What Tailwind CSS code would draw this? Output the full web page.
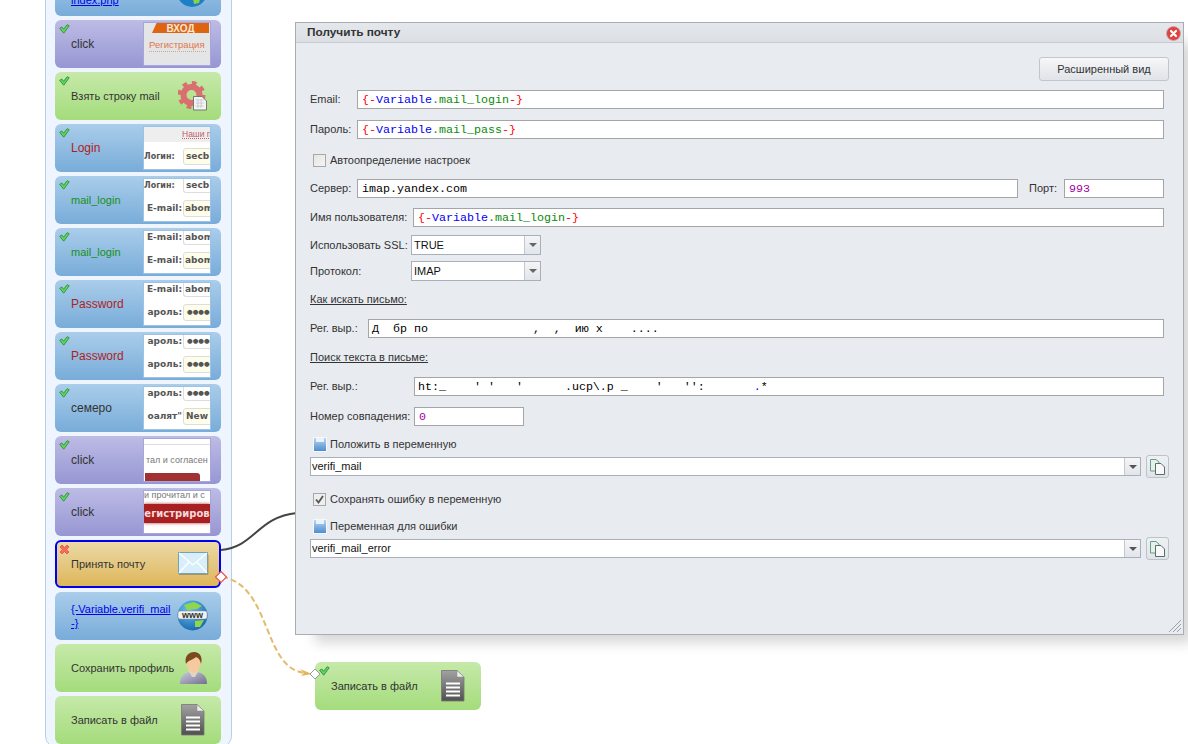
<!DOCTYPE html>
<html lang="ru">
<head>
<meta charset="utf-8">
<script src="https://cdn.jsdelivr.net/npm/@tailwindcss/browser@4"></script>
<title>Получить почту</title>
</head>
<body class="bg-white">
<div class="relative w-[1188px] h-[744px] overflow-hidden bg-white text-[11px] text-[#333] [font-family:'Liberation_Sans',sans-serif]">

  <!-- node column -->
  <div class="ml-[45px] -mt-[41px] w-[187px] h-[789px] bg-[#eef5fe] border border-[#b7d0e8] rounded-b-[12px] pt-[8px] pl-[9px] flex flex-col gap-[4px]">

    <div class="relative shrink-0 w-[166px] h-[48px] rounded-[6px] bg-gradient-to-b from-[#aacdea] to-[#78acd9] flex items-center pl-[16px]">
      <span class="text-[#0000ee] underline leading-[14px] mt-[16px]">index.php</span>
      <svg class="absolute left-[122px] top-[9px]" width="30" height="30" viewBox="0 0 30 30"><circle cx="15" cy="15" r="15" fill="#1d7fc4"/><path d="M8 5 L18 3 L24 8 L18 12 L12 11Z M16 22 L24 19 L22 26 L17 27Z" fill="#8fd04a"/></svg>
    </div>

    <!-- click / registration -->
    <div class="relative shrink-0 w-[166px] h-[48px] rounded-[6px] bg-gradient-to-b from-[#bdbce5] to-[#9796d3] flex items-center pl-[16px] text-[12px]">
      <svg class="absolute left-[4px] top-[4px]" width="11" height="10" viewBox="0 0 11 10"><path d="M.7 4.3 L2.8 3 L4.6 5.3 L8.2.7 L10.2 1.8 L4.7 9.2Z" fill="#5fd75f" stroke="#2c8f3a" stroke-width=".9"/></svg>
      <span>click</span>
      <div class="absolute left-[88px] top-[2px] w-[68px] h-[44px] border border-[#a7a6da] bg-[#e4e5e6] overflow-hidden">
        <div class="ml-[8px] mr-[1px] h-[10px] bg-[#dd6411] flex items-end justify-center text-[10px] leading-[8px] font-bold text-[#fbe6d5] [clip-path:polygon(8%_0,100%_0,100%_100%,0_100%)]">ВХОД</div>
        <div class="mt-[5px] ml-[5px] w-[57px] text-[9.5px] leading-[13px] whitespace-nowrap text-[#e0764a] border-b border-dotted border-[#d8a58a]">Регистрация</div>
      </div>
    </div>

    <!-- take line -->
    <div class="relative shrink-0 w-[166px] h-[48px] rounded-[6px] bg-gradient-to-b from-[#c6e9a9] to-[#a4dc7b] flex items-center pl-[16px]">
      <svg class="absolute left-[4px] top-[4px]" width="11" height="10" viewBox="0 0 11 10"><path d="M.7 4.3 L2.8 3 L4.6 5.3 L8.2.7 L10.2 1.8 L4.7 9.2Z" fill="#5fd75f" stroke="#2c8f3a" stroke-width=".9"/></svg>
      <span>Взять строку mail</span>
      <svg class="absolute left-[123px] top-[9px]" width="30" height="30" viewBox="0 0 30 30"><circle cx="13.5" cy="14" r="12" fill="none" stroke="#d96f6f" stroke-width="4" stroke-dasharray="4.6 4.82"/><circle cx="13.5" cy="14" r="8" fill="none" stroke="#d96f6f" stroke-width="6"/><path d="M15.5 15.5 H24 L28.5 20 V29 H15.5Z" fill="#f4f4f4" stroke="#777" stroke-width="1"/><path d="M17.5 19 H26 M17.5 22 H26 M17.5 25 H26 M20 18 V27 M23 18 V27" stroke="#c3c8cc" stroke-width=".8"/></svg>
    </div>

    <!-- Login -->
    <div class="relative shrink-0 w-[166px] h-[48px] rounded-[6px] bg-gradient-to-b from-[#aacdea] to-[#78acd9] flex items-center pl-[16px] text-[12px] text-[#b01e1e]">
      <svg class="absolute left-[4px] top-[4px]" width="11" height="10" viewBox="0 0 11 10"><path d="M.7 4.3 L2.8 3 L4.6 5.3 L8.2.7 L10.2 1.8 L4.7 9.2Z" fill="#5fd75f" stroke="#2c8f3a" stroke-width=".9"/></svg>
      <span>Login</span>
      <div class="absolute left-[88px] top-[2px] w-[68px] h-[44px] border border-[#9cc3e6] bg-white overflow-hidden text-[9px] font-bold text-[#555] [font-family:'DejaVu_Sans',sans-serif]">
        <div class="h-[15px] bg-[#eeeeee] flex items-center pl-[38px] whitespace-nowrap text-[#c0606e] [font-family:'Liberation_Sans',sans-serif] text-[8.5px] font-normal"><span class="underline decoration-dotted">Наши п</span></div>
        <div class="mt-[6px] flex items-center h-[17px]"><span class="w-[38px] shrink-0 text-[8px] whitespace-nowrap">Логин:</span><div class="ml-[1px] w-[40px] shrink-0 h-[17px] bg-[#fdfde9] border border-[#ddd] rounded-[3px] pl-[2px] text-[9px] leading-[15px] whitespace-nowrap">secb</div></div>
      </div>
    </div>

    <!-- mail_login 1 -->
    <div class="relative shrink-0 w-[166px] h-[48px] rounded-[6px] bg-gradient-to-b from-[#aacdea] to-[#78acd9] flex items-center pl-[16px] text-[#179017]">
      <svg class="absolute left-[4px] top-[4px]" width="11" height="10" viewBox="0 0 11 10"><path d="M.7 4.3 L2.8 3 L4.6 5.3 L8.2.7 L10.2 1.8 L4.7 9.2Z" fill="#5fd75f" stroke="#2c8f3a" stroke-width=".9"/></svg>
      <span>mail_login</span>
      <div class="absolute left-[88px] top-[2px] w-[68px] h-[44px] border border-[#9cc3e6] bg-white overflow-hidden text-[9px] font-bold text-[#555] [font-family:'DejaVu_Sans',sans-serif] flex flex-col justify-between">
        <div class="flex items-center h-[14px]"><span class="w-[38px] shrink-0 text-[8px] whitespace-nowrap">Логин:</span><div class="ml-[1px] w-[40px] shrink-0 h-[14px] bg-white border-l border-b border-[#ddd] rounded-bl-[3px] pl-[2px] text-[9px] leading-[13px] whitespace-nowrap">secb</div></div>
        <div class="mb-[4px] flex items-center h-[17px]"><span class="w-[38px] shrink-0 text-[9px] whitespace-nowrap overflow-hidden flex justify-end"><span class="shrink-0">E-mail:</span></span><div class="ml-[1px] w-[40px] shrink-0 h-[17px] bg-[#fdfde9] border border-[#ddd] rounded-[3px] pl-[1px] text-[9px] leading-[15px] whitespace-nowrap">abom</div></div>
      </div>
    </div>

    <!-- mail_login 2 -->
    <div class="relative shrink-0 w-[166px] h-[48px] rounded-[6px] bg-gradient-to-b from-[#aacdea] to-[#78acd9] flex items-center pl-[16px] text-[#179017]">
      <svg class="absolute left-[4px] top-[4px]" width="11" height="10" viewBox="0 0 11 10"><path d="M.7 4.3 L2.8 3 L4.6 5.3 L8.2.7 L10.2 1.8 L4.7 9.2Z" fill="#5fd75f" stroke="#2c8f3a" stroke-width=".9"/></svg>
      <span>mail_login</span>
      <div class="absolute left-[88px] top-[2px] w-[68px] h-[44px] border border-[#9cc3e6] bg-white overflow-hidden text-[9px] font-bold text-[#555] [font-family:'DejaVu_Sans',sans-serif] flex flex-col justify-between">
        <div class="flex items-center h-[14px]"><span class="w-[38px] shrink-0 text-[9px] whitespace-nowrap overflow-hidden flex justify-end"><span class="shrink-0">E-mail:</span></span><div class="ml-[1px] w-[40px] shrink-0 h-[14px] bg-white border-l border-b border-[#ddd] rounded-bl-[3px] pl-[1px] text-[9px] leading-[13px] whitespace-nowrap">abom</div></div>
        <div class="mb-[4px] flex items-center h-[17px]"><span class="w-[38px] shrink-0 text-[9px] whitespace-nowrap overflow-hidden flex justify-end"><span class="shrink-0">E-mail:</span></span><div class="ml-[1px] w-[40px] shrink-0 h-[17px] bg-[#fdfde9] border border-[#ddd] rounded-[3px] pl-[1px] text-[9px] leading-[15px] whitespace-nowrap">abom</div></div>
      </div>
    </div>

    <!-- Password 1 -->
    <div class="relative shrink-0 w-[166px] h-[48px] rounded-[6px] bg-gradient-to-b from-[#aacdea] to-[#78acd9] flex items-center pl-[16px] text-[12px] text-[#b01e1e]">
      <svg class="absolute left-[4px] top-[4px]" width="11" height="10" viewBox="0 0 11 10"><path d="M.7 4.3 L2.8 3 L4.6 5.3 L8.2.7 L10.2 1.8 L4.7 9.2Z" fill="#5fd75f" stroke="#2c8f3a" stroke-width=".9"/></svg>
      <span>Password</span>
      <div class="absolute left-[88px] top-[2px] w-[68px] h-[44px] border border-[#9cc3e6] bg-white overflow-hidden text-[9px] font-bold text-[#555] [font-family:'DejaVu_Sans',sans-serif] flex flex-col justify-between">
        <div class="flex items-center h-[14px]"><span class="w-[38px] shrink-0 text-[9px] whitespace-nowrap overflow-hidden flex justify-end"><span class="shrink-0">E-mail:</span></span><div class="ml-[1px] w-[40px] shrink-0 h-[14px] bg-white border-l border-b border-[#ddd] rounded-bl-[3px] pl-[1px] text-[9px] leading-[13px] whitespace-nowrap">abom</div></div>
        <div class="mb-[4px] flex items-center h-[17px]"><span class="w-[38px] shrink-0 text-[9px] whitespace-nowrap overflow-hidden flex justify-end"><span class="shrink-0">ароль:</span></span><div class="ml-[1px] w-[40px] shrink-0 h-[17px] bg-[#fdfde9] border border-[#ddd] rounded-[3px] pl-[3px] text-[6.5px] leading-[15px] whitespace-nowrap">●●●●●</div></div>
      </div>
    </div>

    <!-- Password 2 -->
    <div class="relative shrink-0 w-[166px] h-[48px] rounded-[6px] bg-gradient-to-b from-[#aacdea] to-[#78acd9] flex items-center pl-[16px] text-[12px] text-[#b01e1e]">
      <svg class="absolute left-[4px] top-[4px]" width="11" height="10" viewBox="0 0 11 10"><path d="M.7 4.3 L2.8 3 L4.6 5.3 L8.2.7 L10.2 1.8 L4.7 9.2Z" fill="#5fd75f" stroke="#2c8f3a" stroke-width=".9"/></svg>
      <span>Password</span>
      <div class="absolute left-[88px] top-[2px] w-[68px] h-[44px] border border-[#9cc3e6] bg-white overflow-hidden text-[9px] font-bold text-[#555] [font-family:'DejaVu_Sans',sans-serif] flex flex-col justify-between">
        <div class="flex items-center h-[14px]"><span class="w-[38px] shrink-0 text-[9px] whitespace-nowrap overflow-hidden flex justify-end"><span class="shrink-0">ароль:</span></span><div class="ml-[1px] w-[40px] shrink-0 h-[14px] bg-white border-l border-b border-[#ddd] rounded-bl-[3px] pl-[3px] text-[6.5px] leading-[13px] whitespace-nowrap">●●●●●</div></div>
        <div class="mb-[4px] flex items-center h-[17px]"><span class="w-[38px] shrink-0 text-[9px] whitespace-nowrap overflow-hidden flex justify-end"><span class="shrink-0">ароль:</span></span><div class="ml-[1px] w-[40px] shrink-0 h-[17px] bg-[#fdfde9] border border-[#ddd] rounded-[3px] pl-[3px] text-[6.5px] leading-[15px] whitespace-nowrap">●●●●●</div></div>
      </div>
    </div>

    <!-- семеро -->
    <div class="relative shrink-0 w-[166px] h-[48px] rounded-[6px] bg-gradient-to-b from-[#aacdea] to-[#78acd9] flex items-center pl-[16px] text-[12px]">
      <svg class="absolute left-[4px] top-[4px]" width="11" height="10" viewBox="0 0 11 10"><path d="M.7 4.3 L2.8 3 L4.6 5.3 L8.2.7 L10.2 1.8 L4.7 9.2Z" fill="#5fd75f" stroke="#2c8f3a" stroke-width=".9"/></svg>
      <span>семеро</span>
      <div class="absolute left-[88px] top-[2px] w-[68px] h-[44px] border border-[#9cc3e6] bg-white overflow-hidden text-[9px] font-bold text-[#555] [font-family:'DejaVu_Sans',sans-serif] flex flex-col justify-between">
        <div class="flex items-center h-[14px]"><span class="w-[38px] shrink-0 text-[9px] whitespace-nowrap overflow-hidden flex justify-end"><span class="shrink-0">ароль:</span></span><div class="ml-[1px] w-[40px] shrink-0 h-[14px] bg-white border-l border-b border-[#ddd] rounded-bl-[3px] pl-[3px] text-[6.5px] leading-[13px] whitespace-nowrap">●●●●●</div></div>
        <div class="mb-[4px] flex items-center h-[17px]"><span class="w-[38px] shrink-0 text-[9px] whitespace-nowrap overflow-hidden flex justify-end"><span class="shrink-0">оалят"</span></span><div class="ml-[1px] w-[40px] shrink-0 h-[17px] bg-[#fdfde9] border border-[#ddd] rounded-[3px] pl-[2px] text-[9px] leading-[15px] whitespace-nowrap">New</div></div>
      </div>
    </div>

    <!-- click 2 -->
    <div class="relative shrink-0 w-[166px] h-[48px] rounded-[6px] bg-gradient-to-b from-[#bdbce5] to-[#9796d3] flex items-center pl-[16px] text-[12px]">
      <svg class="absolute left-[4px] top-[4px]" width="11" height="10" viewBox="0 0 11 10"><path d="M.7 4.3 L2.8 3 L4.6 5.3 L8.2.7 L10.2 1.8 L4.7 9.2Z" fill="#5fd75f" stroke="#2c8f3a" stroke-width=".9"/></svg>
      <span>click</span>
      <div class="absolute left-[88px] top-[2px] w-[68px] h-[44px] border border-[#a7a6da] bg-white overflow-hidden flex flex-col">
        <div class="h-[6px] border-b border-[#ddd]"></div>
        <div class="mt-[9px] ml-[2px] text-[9px] leading-[13px] text-[#777] whitespace-nowrap">тал и согласен</div>
        <div class="mt-[6px] ml-[1px] w-[55px] flex-1 bg-[#a33030] rounded-tr-[3px]"></div>
      </div>
    </div>

    <!-- click 3 -->
    <div class="relative shrink-0 w-[166px] h-[48px] rounded-[6px] bg-gradient-to-b from-[#bdbce5] to-[#9796d3] flex items-center pl-[16px] text-[12px]">
      <svg class="absolute left-[4px] top-[4px]" width="11" height="10" viewBox="0 0 11 10"><path d="M.7 4.3 L2.8 3 L4.6 5.3 L8.2.7 L10.2 1.8 L4.7 9.2Z" fill="#5fd75f" stroke="#2c8f3a" stroke-width=".9"/></svg>
      <span>click</span>
      <div class="absolute left-[88px] top-[2px] w-[68px] h-[44px] border border-[#a7a6da] bg-white overflow-hidden flex flex-col">
        <div class="h-[10px] text-[9px] leading-[9px] text-[#777] whitespace-nowrap">и прочитал и с</div>
        <div class="mt-[3px] h-[19px] bg-[#a82020] shadow-[0_0_3px_#a33] text-[10px] leading-[19px] font-bold text-[#f6dada] whitespace-nowrap text-center [font-family:'DejaVu_Sans',sans-serif]">егистриров</div>
      </div>
    </div>

    <!-- receive mail -->
    <div class="relative shrink-0 w-[166px] h-[48px] rounded-[6px] border-2 border-[#0000f0] bg-gradient-to-b from-[#ecd9a6] to-[#ddb657] flex items-center pl-[14px]">
      <svg class="absolute left-[2px] top-[2px]" width="11" height="11" viewBox="0 0 11 11"><path d="M1 3 L3 1 L5.5 3.5 L8 1 L10 3 L7.5 5.5 L10 8 L8 10 L5.5 7.5 L3 10 L1 8 L3.5 5.5Z" fill="#fb6a5f" stroke="#d8483f" stroke-width=".7"/></svg>
      <span>Принять почту</span>
      <svg class="absolute left-[121px] top-[10px]" width="31" height="24" viewBox="0 0 31 24"><rect x=".5" y=".5" width="29" height="21" fill="#d8eefa" stroke="#6fa2bd"/><path d="M1 1 L15 13 L29 1 M1 21 L11 10 M29 21 L19 10" fill="none" stroke="#fff" stroke-width="1.3"/><path d="M1 22.5 H30 V3" fill="none" stroke="#a8955f" stroke-width="1"/></svg>
    </div>

    <!-- verifi_mail link -->
    <div class="relative shrink-0 w-[166px] h-[48px] rounded-[6px] bg-gradient-to-b from-[#aacdea] to-[#78acd9] flex items-center pl-[16px]">
      <a class="w-[104px] text-[#0000ee] underline leading-[14px]">{-Variable.verifi_mail -}</a>
      <svg class="absolute left-[122px] top-[8px]" width="31" height="31" viewBox="0 0 31 31"><defs><radialGradient id="g1" cx=".4" cy=".3" r=".8"><stop offset="0" stop-color="#6cc4f2"/><stop offset="1" stop-color="#0f5ea8"/></radialGradient></defs><circle cx="15.5" cy="15.5" r="15" fill="url(#g1)"/><path d="M7 5 L17 2 L25 6 L20 9 L14 9 L11 11Z M18 21 L27 20 L23 27 L18 27Z" fill="#90d64c"/><rect x="1" y="11" width="29" height="8" rx="2" fill="#f2f2f2" stroke="#888" stroke-width=".5"/><text x="15.5" y="18" text-anchor="middle" font-size="9" font-weight="700" font-family="Liberation Sans" fill="#333">www</text></svg>
    </div>

    <!-- save profile -->
    <div class="relative shrink-0 w-[166px] h-[48px] rounded-[6px] bg-gradient-to-b from-[#c6e9a9] to-[#a4dc7b] flex items-center pl-[16px]">
      <span>Сохранить профиль</span>
      <svg class="absolute left-[124px] top-[8px]" width="29" height="33" viewBox="0 0 29 33"><defs><linearGradient id="g2" x1="0" y1="0" x2="1" y2="1"><stop offset="0" stop-color="#c9c9dd"/><stop offset="1" stop-color="#71718f"/></linearGradient></defs><path d="M1 32 C1 24 5 21 11 20 L18 20 C24 21 28 24 28 32Z" fill="url(#g2)"/><path d="M9 18 H20 L16 25 L13 25Z" fill="#e7d2bf"/><ellipse cx="14.5" cy="11" rx="7" ry="9" fill="#f6c99f"/><path d="M7 12 C5 4 10 0 15 0 C21 0 24 5 22 12 C21 7 19 6 17 5 C14 8 9 8 7 12Z" fill="#7a4a1d"/></svg>
    </div>

    <!-- write file -->
    <div class="relative shrink-0 w-[166px] h-[48px] rounded-[6px] bg-gradient-to-b from-[#c6e9a9] to-[#a4dc7b] flex items-center pl-[16px]">
      <span>Записать в файл</span>
      <svg class="absolute left-[124px] top-[8px]" width="28" height="32" viewBox="0 0 28 32"><defs><linearGradient id="g3" x1="0" y1="0" x2="0" y2="1"><stop offset="0" stop-color="#a2a2a2"/><stop offset="1" stop-color="#505050"/></linearGradient></defs><path d="M2.500 .5 H18 L25 7 V31 H2.500Z" fill="url(#g3)" stroke="#777" stroke-width=".8"/><path d="M18 .5 V7 H25Z" fill="#eee" stroke="#888" stroke-width=".5"/><path d="M7 13.500 H21 M7 17.500 H21 M7 21.500 H21 M7 25.500 H21" stroke="#fff" stroke-width="2"/></svg>
    </div>
  </div>

  <!-- free-standing diagram node -->
  <div class="absolute left-[315px] top-[662px] w-[166px] h-[48px] rounded-[6px] bg-gradient-to-b from-[#c6e9a9] to-[#a4dc7b] flex items-center pl-[16px]">
    <svg class="absolute left-[4px] top-[4px]" width="11" height="10" viewBox="0 0 11 10"><path d="M.7 4.3 L2.8 3 L4.6 5.3 L8.2.7 L10.2 1.800 L4.7 9.2Z" fill="#5fd75f" stroke="#2c8f3a" stroke-width=".9"/></svg>
    <span>Записать в файл</span>
    <svg class="absolute left-[124px] top-[8px]" width="28" height="32" viewBox="0 0 28 32"><defs><linearGradient id="g4" x1="0" y1="0" x2="0" y2="1"><stop offset="0" stop-color="#a2a2a2"/><stop offset="1" stop-color="#505050"/></linearGradient></defs><path d="M2.500 .5 H18 L25 7 V31 H2.500Z" fill="url(#g4)" stroke="#777" stroke-width=".8"/><path d="M18 .5 V7 H25Z" fill="#eee" stroke="#888" stroke-width=".5"/><path d="M7 13.500 H21 M7 17.500 H21 M7 21.500 H21 M7 25.500 H21" stroke="#fff" stroke-width="2"/></svg>
  </div>

  <!-- connections -->
  <svg class="absolute left-0 top-0 pointer-events-none" width="1188" height="744" viewBox="0 0 1188 744">
    <path d="M221 550 C255 547 257 517 297 513" fill="none" stroke="#444" stroke-width="2"/>
    <path d="M222 577 C272 585 262 670 306 673" fill="none" stroke="#e2bb6c" stroke-width="2" stroke-dasharray="6 3"/>
    <path d="M300 669 L312 674 L301 676 L304 673Z" fill="#e2b65f"/>
    <path d="M221 571.500 L226.500 577 L221 582.500 L215.500 577Z" fill="#fff" stroke="#f05050" stroke-width="1.2"/>
    <path d="M315 669 L320 674 L315 679 L310 674Z" fill="#fff" stroke="#999" stroke-width="1"/>
  </svg>

  <!-- dialog -->
  <div class="absolute left-[295px] top-[22px] w-[889px] h-[613px] border border-[#a9adb2] bg-[#e8ebf0] flex flex-col shadow-[14px_14px_12px_-6px_rgba(0,0,0,0.16)]">
    <div class="relative shrink-0 h-[20px] bg-gradient-to-b from-[#e4e7eb] to-[#dcdfe4] border-b border-[#c8ccd1] pl-[11px] pt-[1px] flex items-center font-bold text-[11.8px] text-[#333]">
      Получить почту
      <svg class="absolute right-[2px] top-[3px]" width="15" height="15" viewBox="0 0 15 15"><circle cx="7.500" cy="7.500" r="7" fill="#e2423f" stroke="#c9aaa8" stroke-width=".8"/><path d="M5 5 L10 10 M10 5 L5 10" stroke="#fff" stroke-width="2.200" stroke-linecap="round"/></svg>
    </div>

    <div class="relative flex-1 pl-[14px] pr-[14px] flex flex-col">
      <div class="mt-[14px] flex justify-end">
        <button class="w-[130px] h-[24px] rounded-[3px] border border-[#c2c6cc] bg-gradient-to-b from-[#f5f7f9] to-[#e0e3e8] text-[#333]">Расширенный вид</button>
      </div>

      <div class="mt-[9px] mr-[5px] flex items-center h-[19px]">
        <span class="w-[47px] shrink-0">Email:</span>
        <div class="flex-1 h-[19px] bg-white border border-[#a5a5a5] pl-[4px] text-[11.67px] leading-[18px] whitespace-pre [font-family:'Liberation_Mono',monospace]"><span class="text-[#f00]">{-</span><span class="text-[#0000f0]">Variable</span><span class="text-[#008080]">.</span><span class="text-[#0a8a0a]">mail_login</span><span class="text-[#f00]">-}</span></div>
      </div>
      <div class="mt-[11px] mr-[5px] flex items-center h-[19px]">
        <span class="w-[47px] shrink-0">Пароль:</span>
        <div class="flex-1 h-[19px] bg-white border border-[#a5a5a5] pl-[4px] text-[11.67px] leading-[18px] whitespace-pre [font-family:'Liberation_Mono',monospace]"><span class="text-[#f00]">{-</span><span class="text-[#0000f0]">Variable</span><span class="text-[#008080]">.</span><span class="text-[#0a8a0a]">mail_pass</span><span class="text-[#f00]">-}</span></div>
      </div>

      <div class="mt-[14px] ml-[3px] flex items-center h-[14px]">
        <span class="w-[13px] h-[13px] border border-[#a8a8a8] bg-gradient-to-br from-[#e6e6e6] to-[#f4f4f4] shrink-0"></span>
        <span class="ml-[4px]">Автоопределение настроек</span>
      </div>

      <div class="mt-[12px] mr-[5px] flex items-center h-[19px]">
        <span class="w-[47px] shrink-0">Сервер:</span>
        <div class="w-[661px] shrink-0 h-[19px] bg-white border border-[#a5a5a5] pl-[4px] text-[11.67px] leading-[18px] text-[#000] [font-family:'Liberation_Mono',monospace]">imap.yandex.com</div>
        <span class="ml-[11px] w-[35px] shrink-0">Порт:</span>
        <div class="flex-1 h-[19px] bg-white border border-[#a5a5a5] pl-[4px] text-[11.67px] leading-[18px] text-[#a000a0] [font-family:'Liberation_Mono',monospace]">993</div>
      </div>

      <div class="mt-[10px] mr-[5px] flex items-center h-[19px]">
        <span class="w-[103px] shrink-0 whitespace-nowrap">Имя пользователя:</span>
        <div class="flex-1 h-[19px] bg-white border border-[#a5a5a5] pl-[4px] text-[11.67px] leading-[18px] whitespace-pre [font-family:'Liberation_Mono',monospace]"><span class="text-[#f00]">{-</span><span class="text-[#0000f0]">Variable</span><span class="text-[#008080]">.</span><span class="text-[#0a8a0a]">mail_login</span><span class="text-[#f00]">-}</span></div>
      </div>

      <div class="mt-[8px] flex items-center h-[20px]">
        <span class="w-[101px] shrink-0 whitespace-nowrap">Использовать SSL:</span>
        <div class="w-[130px] h-[20px] flex border border-[#a9b0ba] bg-white text-[#111]">
          <span class="flex-1 pl-[2px] leading-[18px]">TRUE</span>
          <span class="w-[16px] border-l border-[#c3c8ce] bg-gradient-to-b from-[#f3f5f7] to-[#e2e5ea] flex items-center justify-center"><svg width="8" height="4" viewBox="0 0 8 4"><path d="M0 0 H8 L4 4Z" fill="#666"/></svg></span>
        </div>
      </div>
      <div class="mt-[6px] flex items-center h-[20px]">
        <span class="w-[101px] shrink-0">Протокол:</span>
        <div class="w-[130px] h-[20px] flex border border-[#a9b0ba] bg-white text-[#111]">
          <span class="flex-1 pl-[2px] leading-[18px]">IMAP</span>
          <span class="w-[16px] border-l border-[#c3c8ce] bg-gradient-to-b from-[#f3f5f7] to-[#e2e5ea] flex items-center justify-center"><svg width="8" height="4" viewBox="0 0 8 4"><path d="M0 0 H8 L4 4Z" fill="#666"/></svg></span>
        </div>
      </div>

      <div class="mt-[11px] h-[14px] leading-[14px] underline">Как искать письмо:</div>

      <div class="mt-[13px] mr-[5px] flex items-center h-[19px]">
        <span class="w-[58px] shrink-0">Рег. выр.:</span>
        <div class="flex-1 h-[19px] bg-white border border-[#a5a5a5] pl-[3px] text-[11.67px] leading-[18px] whitespace-pre text-[#000] [font-family:'Liberation_Mono',monospace]">Д  бр по               ,  ,  ию х    ....</div>
      </div>

      <div class="mt-[12px] h-[14px] leading-[14px] underline">Поиск текста в письме:</div>

      <div class="mt-[13px] mr-[5px] flex items-center h-[19px]">
        <span class="w-[104px] shrink-0">Рег. выр.:</span>
        <div class="flex-1 h-[19px] bg-white border border-[#a5a5a5] pl-[3px] text-[11.67px] leading-[18px] whitespace-pre text-[#000] [font-family:'Liberation_Mono',monospace]">ht:_    ' '   '      .ucp\.p _    '   '':       <span class="text-[#0000f0]">.</span>*</div>
      </div>

      <div class="mt-[11px] flex items-center h-[19px]">
        <span class="w-[104px] shrink-0 whitespace-nowrap">Номер совпадения:</span>
        <div class="w-[110px] h-[19px] bg-white border border-[#a5a5a5] pl-[4px] text-[11.67px] leading-[18px] text-[#a000a0] [font-family:'Liberation_Mono',monospace]">0</div>
      </div>

      <div class="mt-[11px] ml-[3px] flex items-center h-[15px]">
        <svg width="14" height="15" viewBox="0 0 14 15"><defs><linearGradient id="g5" x1="0" y1="0" x2="0" y2="1"><stop offset="0" stop-color="#bcd8f0"/><stop offset="1" stop-color="#4a8bcf"/></linearGradient></defs><rect x=".5" y=".5" width="13" height="14" fill="url(#g5)" stroke="#f4f8fb"/><rect x="3" y="1" width="8" height="4" fill="#eaf2fa"/></svg>
        <span class="ml-[3px]">Положить в переменную</span>
      </div>
      <div class="mt-[5px] flex items-center h-[19px]">
        <div class="w-[831px] h-[19px] flex border border-[#a9b0ba] bg-white text-[#111]">
          <span class="flex-1 pl-[1px] leading-[17px]">verifi_mail</span>
          <span class="w-[16px] border-l border-[#c3c8ce] bg-gradient-to-b from-[#f3f5f7] to-[#e2e5ea] flex items-center justify-center"><svg width="8" height="4" viewBox="0 0 8 4"><path d="M0 0 H8 L4 4Z" fill="#555"/></svg></span>
        </div>
        <span class="ml-[5px] w-[23px] h-[23px] shrink-0 rounded-[3px] border border-[#bcc2c8] bg-gradient-to-b from-[#eef1f4] to-[#e0e4e8] flex items-center justify-center"><svg width="15" height="16" viewBox="0 0 15 16"><path d="M.5 .5 H6 L9 3 V12 H.5Z" fill="#e4f0ea" stroke="#6f9a8a"/><path d="M5.500 4.500 H11 L14.500 8 V15.500 H5.500Z" fill="#f6f9f8" stroke="#59706a"/></svg></span>
      </div>

      <div class="mt-[16px] ml-[3px] flex items-center h-[14px]">
        <span class="w-[13px] h-[13px] border border-[#a8a8a8] bg-[#eeeeee] shrink-0 flex items-center justify-center"><svg width="9" height="9" viewBox="0 0 9 9"><path d="M1 4.500 L3.500 7.500 L8 1" fill="none" stroke="#555" stroke-width="1.800"/></svg></span>
        <span class="ml-[4px]">Сохранять ошибку в переменную</span>
      </div>

      <div class="mt-[13px] ml-[3px] flex items-center h-[15px]">
        <svg width="14" height="15" viewBox="0 0 14 15"><defs><linearGradient id="g6" x1="0" y1="0" x2="0" y2="1"><stop offset="0" stop-color="#bcd8f0"/><stop offset="1" stop-color="#4a8bcf"/></linearGradient></defs><rect x=".5" y=".5" width="13" height="14" fill="url(#g6)" stroke="#f4f8fb"/><rect x="3" y="1" width="8" height="4" fill="#eaf2fa"/></svg>
        <span class="ml-[3px]">Переменная для ошибки</span>
      </div>
      <div class="mt-[5px] flex items-center h-[19px]">
        <div class="w-[831px] h-[19px] flex border border-[#a9b0ba] bg-white text-[#111]">
          <span class="flex-1 pl-[1px] leading-[17px]">verifi_mail_error</span>
          <span class="w-[16px] border-l border-[#c3c8ce] bg-gradient-to-b from-[#f3f5f7] to-[#e2e5ea] flex items-center justify-center"><svg width="8" height="4" viewBox="0 0 8 4"><path d="M0 0 H8 L4 4Z" fill="#555"/></svg></span>
        </div>
        <span class="ml-[5px] w-[23px] h-[23px] shrink-0 rounded-[3px] border border-[#bcc2c8] bg-gradient-to-b from-[#eef1f4] to-[#e0e4e8] flex items-center justify-center"><svg width="15" height="16" viewBox="0 0 15 16"><path d="M.5 .5 H6 L9 3 V12 H.5Z" fill="#e4f0ea" stroke="#6f9a8a"/><path d="M5.500 4.500 H11 L14.500 8 V15.500 H5.500Z" fill="#f6f9f8" stroke="#59706a"/></svg></span>
      </div>

      <svg class="absolute right-[1px] bottom-[1px]" width="14" height="14" viewBox="0 0 14 14"><path d="M13 1 L1 13 M13 5 L5 13 M13 9 L9 13" stroke="#9aa1a8" stroke-width="1"/></svg>
    </div>
  </div>
</div>
</body>
</html>
